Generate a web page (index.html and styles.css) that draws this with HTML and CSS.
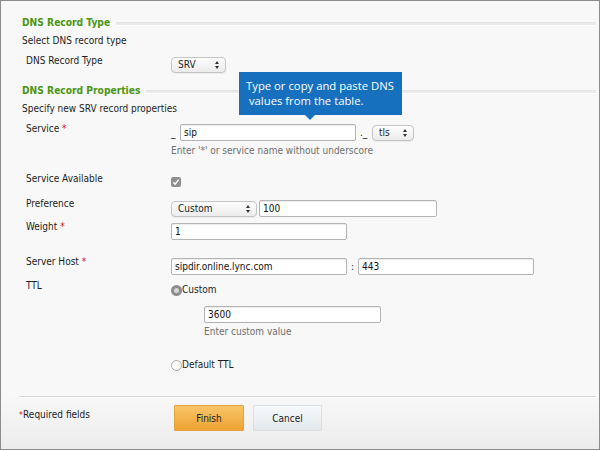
FILE: index.html
```html
<!DOCTYPE html>
<html>
<head>
<meta charset="utf-8">
<link rel="stylesheet" href="styles.css">
</head>
<body>
<div class="page">
  <div class="section-head h1"><span>DNS Record Type</span><i class="rule"></i></div>
  <div class="intro intro1">Select DNS record type</div>
  <div class="row row-type">
    <div class="label">DNS Record Type</div>
    <div class="ctrl"><span class="select w-srv">SRV</span></div>
  </div>

  <div class="section-head h2"><span>DNS Record Properties</span><i class="rule"></i></div>
  <div class="intro intro2">Specify new SRV record properties</div>

  <div class="row row-service">
    <div class="label">Service <b class="req">*</b></div>
    <div class="ctrl">
      <div class="line">
        <span class="pre">_</span><span class="input w-svc">sip</span><span class="sep">._</span><span class="select w-tls">tls</span>
      </div>
      <div class="hint hint1">Enter '*' or service name without underscore</div>
    </div>
  </div>

  <div class="row row-avail">
    <div class="label">Service Available</div>
    <div class="ctrl">
      <span class="checkbox"><svg viewBox="0 0 10 10" width="10" height="10"><path d="M2.3 5.2 L4.1 7.1 L7.8 2.6" fill="none" stroke="#fff" stroke-width="1.4"/></svg></span>
    </div>
  </div>

  <div class="row row-pref">
    <div class="label">Preference</div>
    <div class="ctrl line"><span class="select w-custom">Custom</span><span class="input w-pref">100</span></div>
  </div>

  <div class="row row-weight">
    <div class="label">Weight <b class="req">*</b></div>
    <div class="ctrl"><span class="input w-std">1</span></div>
  </div>

  <div class="row row-host">
    <div class="label">Server Host <b class="req">*</b></div>
    <div class="ctrl line"><span class="input w-std">sipdir.online.lync.com</span><span class="colon">:</span><span class="input w-std">443</span></div>
  </div>

  <div class="row row-ttl">
    <div class="label">TTL</div>
    <div class="ctrl">
      <div class="radio-line"><span class="radio on"></span>Custom</div>
      <div class="ttl-sub">
        <span class="input w-ttl">3600</span>
        <div class="hint hint2">Enter custom value</div>
      </div>
      <div class="radio-line default"><span class="radio"></span>Default TTL</div>
    </div>
  </div>

  <div class="separator"></div>

  <div class="footer">
    <div class="required"><b class="req">*</b>Required fields</div>
    <button class="btn finish">Finish</button>
    <button class="btn cancel">Cancel</button>
  </div>

  <div class="tooltip">Type or copy and paste DNS<br>&nbsp;values from the table.</div>
</div>
</body>
</html>
```

FILE: styles.css
```css
html, body {
  margin: 0;
  padding: 0;
}
body {
  font-family: "DejaVu Sans Condensed", "DejaVu Sans", Verdana, sans-serif;
  font-stretch: condensed;
  font-size: 10px;
  color: #1e1e1e;
}
.page {
  position: relative;
  width: 600px;
  height: 450px;
  box-sizing: border-box;
  border: 1px solid #8c8c8c;
  background: linear-gradient(#f8f8f8, #f8f8f8 88%, #ececec);
  padding: 0 3px 0 18px;
  overflow: hidden;
}
.section-head {
  display: flex;
  align-items: center;
  gap: 6px;
  padding-left: 3px;
  font-weight: bold;
  font-size: 10.2px;
  color: #4b9614;
  line-height: 14px;
}
.section-head .rule {
  flex: 1;
  height: 2px;
  border-top: 1px solid #e4e4e4;
  border-bottom: 1px solid #ffffff;
  background: #ebebeb;
  margin-top: 2px;
}
.h1 { margin-top: 15px; }
.h2 { margin-top: 11px; }
.intro {
  padding-left: 3px;
  line-height: 14px;
}
.intro1 { margin-top: 4px; }
.intro2 { margin-top: 4px; }

.row {
  display: grid;
  grid-template-columns: 145px 1fr;
  padding-left: 7px;
}
.label { line-height: 14px; }
.req { color: #d11; font-weight: normal; }
.ctrl { display: flex; flex-direction: column; align-items: flex-start; }
.line { display: flex; flex-direction: row; align-items: center; }

.row-type { margin-top: 6px; }
.row-type .ctrl { padding-top: 3px; }
.row-service { margin-top: 6px; }
.row-service .ctrl { padding-top: 2px; }
.row-avail { margin-top: 14px; }
.row-avail .ctrl { padding-top: 5px; }
.row-pref { margin-top: 10px; }
.row-pref.row .ctrl { padding-top: 3px; }
.row-weight { margin-top: 3px; }
.row-weight .ctrl { padding-top: 3px; }
.row-host { margin-top: 15px; }
.row-host .ctrl { padding-top: 3px; }
.row-ttl { margin-top: 4px; }
.row-ttl .ctrl { padding-top: 4px; }

.input {
  display: inline-block;
  box-sizing: border-box;
  height: 17px;
  line-height: 15px;
  border: 1px solid #b4b4b4;
  border-radius: 2px;
  background: #fff;
  box-shadow: inset 0 1px 1px rgba(0,0,0,0.08);
  padding: 0 3px;
  font-size: 10px;
  color: #111;
}
.select {
  position: relative;
  display: inline-block;
  box-sizing: border-box;
  height: 16px;
  line-height: 14px;
  border: 1px solid #c4c4c4;
  border-radius: 4px;
  background: linear-gradient(#fdfdfd, #ececec);
  box-shadow: 0 1px 0 rgba(0,0,0,0.05);
  padding: 0 6px;
  font-size: 10px;
}
.select::after {
  content: "";
  position: absolute;
  right: 6px;
  top: 3px;
  width: 0;
  height: 0;
  border-left: 2.5px solid transparent;
  border-right: 2.5px solid transparent;
  border-bottom: 3px solid #333;
}
.select::before {
  content: "";
  position: absolute;
  right: 6px;
  bottom: 3px;
  width: 0;
  height: 0;
  border-left: 2.5px solid transparent;
  border-right: 2.5px solid transparent;
  border-top: 3px solid #333;
}
.w-srv { width: 55px; }
.w-tls { width: 42px; }
.w-custom { width: 86px; }
.w-svc { width: 176px; }
.w-pref { width: 178px; margin-left: 2px; }
.w-std { width: 176px; }
.w-ttl { width: 177px; }
.pre { width: 9px; }
.sep { width: 12px; padding-left: 4px; }
.colon { width: 11px; text-align: center; }

.hint { color: #6f6f6f; line-height: 14px; }
.hint1 { margin-top: 3px; }

.checkbox {
  display: inline-flex;
  width: 10px;
  height: 10px;
  border-radius: 2px;
  background: #8e8e8e;
}
.radio-line { display: flex; align-items: center; line-height: 14px; }
.radio {
  display: inline-block;
  box-sizing: border-box;
  width: 11px;
  height: 11px;
  border-radius: 50%;
  border: 1px solid #a8a8a8;
  background: #fff;
  margin-right: 0;
}
.radio.on {
  border: 3px solid #8e8e8e;
  background: #d8d8d8;
}
.ttl-sub { margin-top: 9px; margin-left: 33px; }
.hint2 { margin-top: 2px; }
.radio-line.default { margin-top: 19px; }

.separator {
  margin-top: 24px;
  height: 1px;
  background: #d6d6d6;
  border-bottom: 1px solid #fff;
}
.footer {
  display: flex;
  align-items: flex-start;
  margin-top: 7px;
}
.required {
  width: 155px;
  padding-top: 3px;
  line-height: 14px;
}
.required .req { font-size: 9px; }
.btn {
  box-sizing: border-box;
  height: 26px;
  font-family: "DejaVu Sans Condensed", "DejaVu Sans", Verdana, sans-serif;
  font-stretch: condensed;
  font-size: 10px;
  color: #222;
  border-radius: 1px;
  padding: 0;
}
.finish {
  width: 70px;
  border: 1px solid #e3a140;
  background: linear-gradient(#f9c569, #eea232);
}
.cancel {
  width: 69px;
  margin-left: 9px;
  border: 1px solid #d9dfe3;
  background: linear-gradient(#f7f9fa, #e2e8ec);
}

.tooltip {
  position: absolute;
  left: 238px;
  top: 71px;
  width: 163px;
  height: 43px;
  box-sizing: border-box;
  background: #1670be;
  color: #fff;
  font-family: "Open Sans", sans-serif;
  font-stretch: normal;
  font-size: 11.3px;
  line-height: 15px;
  white-space: nowrap;
  padding: 6px 0 0 7px;
}
.tooltip::after {
  content: "";
  position: absolute;
  left: 66px;
  bottom: -5px;
  border-left: 5px solid transparent;
  border-right: 5px solid transparent;
  border-top: 5px solid #1670be;
}
```
